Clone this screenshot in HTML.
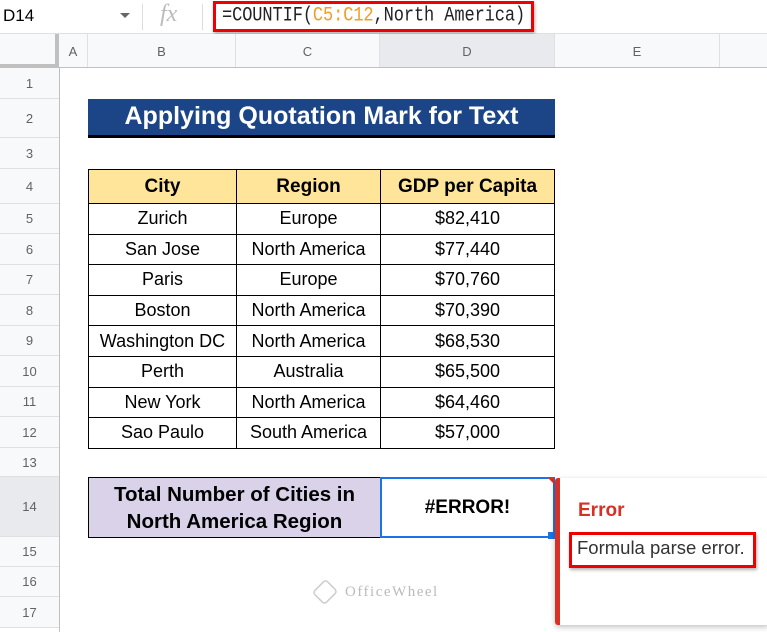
<!DOCTYPE html>
<html><head><meta charset="utf-8"><style>
*{margin:0;padding:0;box-sizing:border-box}
body{width:767px;height:632px;overflow:hidden;background:#fff;font-family:"Liberation Sans",Arial,sans-serif;position:relative}
.a{position:absolute}
.rh{position:absolute;left:0;width:59px;background:#f8f9fa;border-bottom:1px solid #e0e0e0;color:#5f6368;font-size:13px;display:flex;align-items:center;justify-content:center}
.ch{position:absolute;top:34px;height:34px;background:#f8f9fa;border-right:1px solid #e0e0e0;color:#5f6368;font-size:13px;display:flex;align-items:center;justify-content:center}
.c{position:absolute;display:flex;align-items:center;justify-content:center;font-size:18px;color:#000;border:1px solid #000}
</style></head><body>
<div class="a" style="left:0;top:0;width:767px;height:34px;background:#fff;border-bottom:1px solid #e0e0e0"></div>
<div class="a" style="left:3px;top:6px;font-size:17px;color:#000">D14</div>
<div class="a" style="left:120px;top:13px;width:0;height:0;border-left:5px solid transparent;border-right:5px solid transparent;border-top:5px solid #666"></div>
<div class="a" style="left:142px;top:4px;width:1px;height:26px;background:#ddd"></div>
<div class="a" style="left:160px;top:1px;font-family:'Liberation Serif',serif;font-style:italic;font-size:24px;color:#bbb">fx</div>
<div class="a" style="left:202px;top:4px;width:1px;height:26px;background:#ddd"></div>
<div class="a" style="left:213px;top:1px;width:321px;height:31px;border:3px solid #e00;box-shadow:1px 2px 3px rgba(0,0,0,.3)"></div>
<div class="a" style="left:222px;top:5px;font-family:'Liberation Mono',monospace;font-size:17px;color:#222;letter-spacing:-0.1px;transform:scaleY(1.2);transform-origin:top">=COUNTIF(<span style="color:#f39c26">C5:C12</span>,North America)</div>
<div class="a" style="left:0;top:34px;width:59px;height:34px;background:#f8f9fa;border-right:4px solid #c0c0c0;border-bottom:4px solid #c0c0c0"></div>
<div class="ch" style="left:59px;width:29px">A</div>
<div class="ch" style="left:88px;width:148px">B</div>
<div class="ch" style="left:236px;width:144px">C</div>
<div class="ch" style="left:380px;width:175px;background:#e8eaed">D</div>
<div class="ch" style="left:555px;width:165px">E</div>
<div class="ch" style="left:720px;width:47px;border-right:none"></div>
<div class="a" style="left:59px;top:67px;width:708px;height:1px;background:#c0c0c0"></div>
<div class="a" style="left:59px;top:68px;width:1px;height:564px;background:#c0c0c0"></div>
<div class="rh" style="top:68px;height:31px">1</div>
<div class="rh" style="top:99px;height:39px">2</div>
<div class="rh" style="top:138px;height:31px">3</div>
<div class="rh" style="top:169px;height:35px">4</div>
<div class="rh" style="top:204px;height:30px">5</div>
<div class="rh" style="top:234px;height:31px">6</div>
<div class="rh" style="top:265px;height:30px">7</div>
<div class="rh" style="top:295px;height:31px">8</div>
<div class="rh" style="top:326px;height:30px">9</div>
<div class="rh" style="top:356px;height:31px">10</div>
<div class="rh" style="top:387px;height:30px">11</div>
<div class="rh" style="top:417px;height:31px">12</div>
<div class="rh" style="top:448px;height:29px">13</div>
<div class="rh" style="top:477px;height:60px;background:#e8eaed">14</div>
<div class="rh" style="top:537px;height:30px">15</div>
<div class="rh" style="top:567px;height:30px">16</div>
<div class="rh" style="top:597px;height:31px">17</div>
<div class="a" style="left:88px;top:99px;width:467px;height:39px;background:#1c4587;border-bottom:3px solid #000;color:#fff;font-weight:bold;font-size:25px;display:flex;align-items:center;justify-content:center;padding-bottom:2px">Applying Quotation Mark for Text</div>
<div id="t"></div>
<div class="c" style="left:88px;top:169px;width:149px;height:35px;background:#ffe599;font-weight:bold;font-size:19px">City</div>
<div class="c" style="left:236px;top:169px;width:145px;height:35px;background:#ffe599;font-weight:bold;font-size:19px">Region</div>
<div class="c" style="left:380px;top:169px;width:175px;height:35px;background:#ffe599;font-weight:bold;font-size:19px">GDP per Capita</div>
<script>
var d=[["Zurich","Europe","$82,410"],["San Jose","North America","$77,440"],["Paris","Europe","$70,760"],["Boston","North America","$70,390"],["Washington DC","North America","$68,530"],["Perth","Australia","$65,500"],["New York","North America","$64,460"],["Sao Paulo","South America","$57,000"]];
var h="";for(var i=0;i<8;i++){var y=203+i*30.6;
h+='<div class="c" style="left:88px;top:'+y+'px;width:149px;height:31.6px">'+d[i][0]+'</div>';
h+='<div class="c" style="left:236px;top:'+y+'px;width:145px;height:31.6px">'+d[i][1]+'</div>';
h+='<div class="c" style="left:380px;top:'+y+'px;width:175px;height:31.6px">'+d[i][2]+'</div>';}
document.getElementById("t").outerHTML=h;
</script>
<div class="c" style="left:88px;top:477px;width:293px;height:61px;background:#d9d2e9;font-weight:bold;font-size:20.5px;text-align:center;line-height:27px">Total Number of Cities in<br>North America Region</div>
<div class="c" style="left:380px;top:477px;width:175px;height:61px;font-weight:bold;font-size:19px;border:2px solid #1a73e8">#ERROR!</div>
<div class="a" style="left:548px;top:532px;width:7px;height:7px;background:#1a73e8"></div>
<div class="a" style="left:548px;top:478px;width:0;height:0;border-left:6px solid transparent;border-top:6px solid #d93025"></div>
<div class="a" style="left:555px;top:478px;width:214px;height:147px;background:#fff;border-left:5px solid #d93025;border-radius:3px;box-shadow:0 2px 6px rgba(0,0,0,.25)"></div>
<div class="a" style="left:578px;top:500px;color:#d93025;font-weight:bold;font-size:19px">Error</div>
<div class="a" style="left:569px;top:532px;width:187px;height:36px;border:3px solid #e00;box-shadow:1px 2px 3px rgba(0,0,0,.3)"></div>
<div class="a" style="left:577px;top:537px;font-size:18.5px;color:#333">Formula parse error.</div>
<div class="a" style="left:313px;top:579px;width:24px;height:26px;border:2px solid #ccc;border-radius:5px;transform:rotate(45deg) scale(.75)"></div>
<div class="a" style="left:345px;top:584px;font-family:'Liberation Serif',serif;font-size:15px;color:#bbb;letter-spacing:1.5px">OfficeWheel</div>
</body></html>
